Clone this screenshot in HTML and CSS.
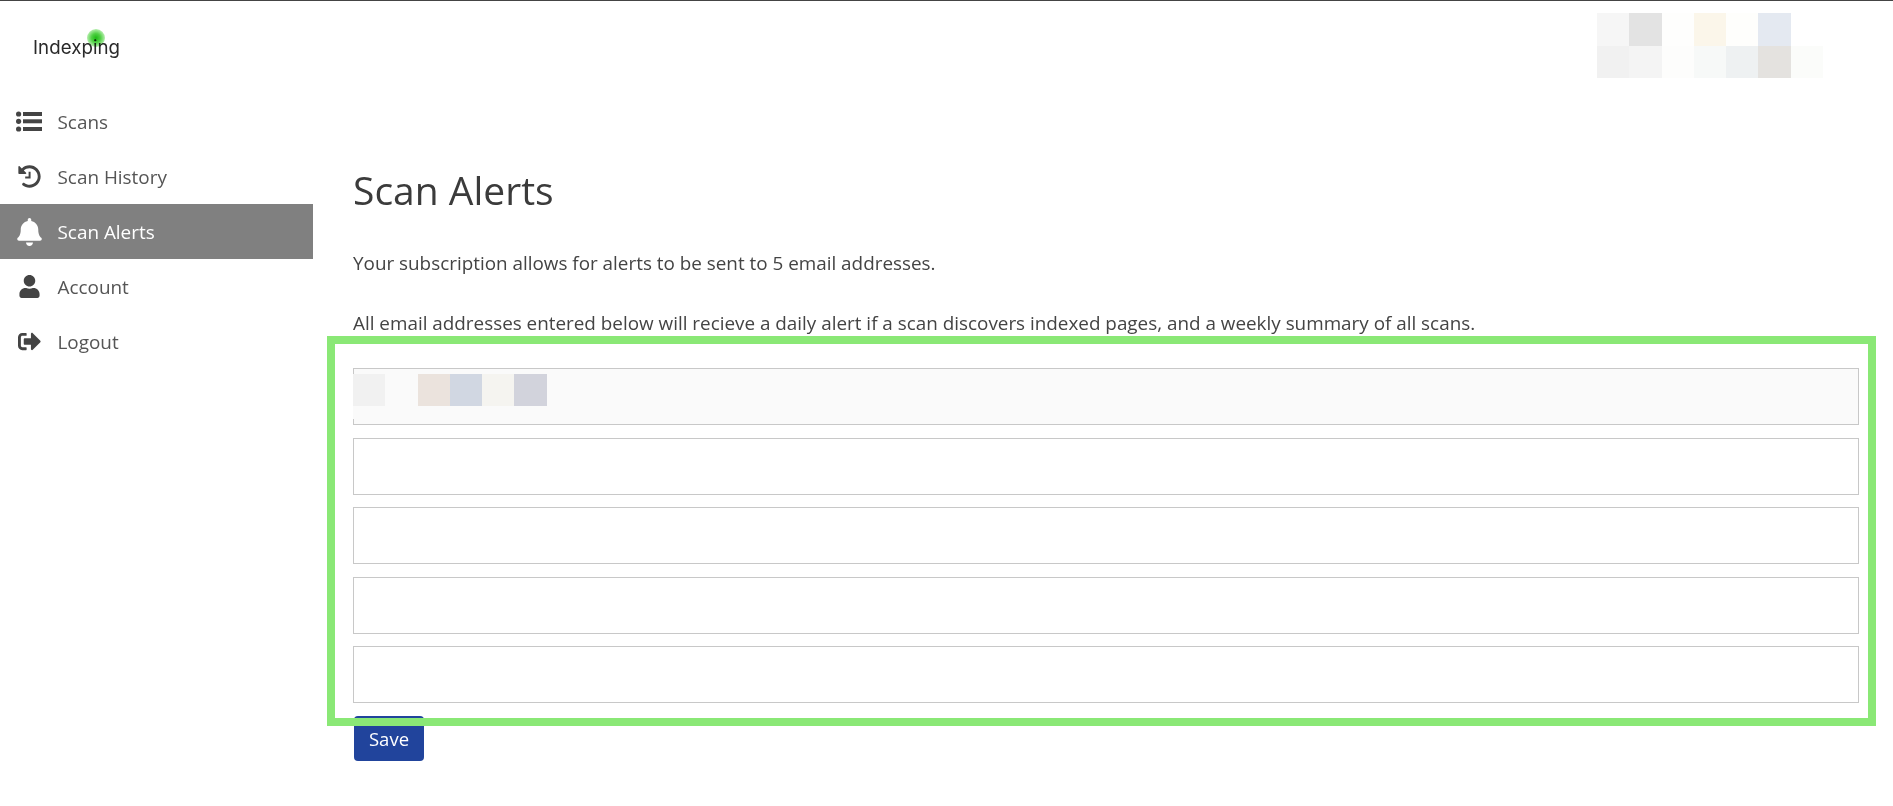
FILE: index.html
```html
<!DOCTYPE html>
<html lang="en">
<head>
<meta charset="utf-8">
<title>Scan Alerts - Indexping</title>
<link rel="stylesheet" href="styles.css">
</head>
<body>
<div class="page">
  <aside class="sidebar">
    <a class="logo" href="#"><span class="logo-text">Indexping</span><span class="logo-dot"></span></a>
    <nav class="nav">
      <a class="nav-item" href="#">
        <span class="nav-icon"><svg class="ico-list" viewBox="0 0 26 21"><circle cx="2.6" cy="3" r="2.6"/><circle cx="2.6" cy="10.3" r="2.6"/><circle cx="2.6" cy="18" r="2.6"/><rect x="7" y="1" width="19" height="4"/><rect x="7" y="8.3" width="19" height="4"/><rect x="7" y="16" width="19" height="4"/></svg></span>
        Scans
      </a>
      <a class="nav-item" href="#">
        <span class="nav-icon"><svg class="ico-history" viewBox="0 0 512 512"><path d="M504 255.531c.253 136.64-111.18 248.372-247.82 248.468-59.015.042-113.223-20.53-155.822-54.911-11.077-8.94-11.905-25.541-1.839-35.607l11.267-11.267c8.609-8.609 22.353-9.551 31.891-1.984C173.062 425.135 212.781 440 256 440c101.705 0 184-82.311 184-184 0-101.705-82.311-184-184-184-48.814 0-93.149 18.969-126.068 49.932l50.754 50.754c10.08 10.08 2.941 27.314-11.313 27.314H24c-8.837 0-16-7.163-16-16V38.627c0-14.254 17.234-21.393 27.314-11.314l49.372 49.372C129.209 34.136 189.552 8 256 8c136.81 0 247.747 110.78 248 247.531z"/><path d="M236 150h44v150H160v-42h76z"/></svg></span>
        Scan History
      </a>
      <a class="nav-item is-active" href="#">
        <span class="nav-icon"><svg class="ico-bell" viewBox="0 0 448 512"><path d="M224 512c35.32 0 63.97-28.65 63.97-64H160.03c0 35.35 28.65 64 63.97 64zm215.39-149.71c-19.32-20.76-55.47-51.99-55.47-154.29 0-77.7-54.48-139.9-127.94-155.16V32c0-17.67-14.32-32-31.98-32s-31.98 14.33-31.98 32v20.84C118.56 68.1 64.08 130.3 64.08 208c0 102.3-36.15 133.53-55.47 154.29-6 6.45-8.66 14.16-8.61 21.71.11 16.4 12.98 32 32.1 32h383.8c19.12 0 32-15.6 32.1-32 .05-7.55-2.61-15.27-8.61-21.71z"/></svg></span>
        Scan Alerts
      </a>
      <a class="nav-item" href="#">
        <span class="nav-icon"><svg class="ico-user" viewBox="0 0 448 512"><path d="M224 256c70.7 0 128-57.3 128-128S294.7 0 224 0 96 57.3 96 128s57.3 128 128 128zm89.6 32h-16.7c-22.2 10.2-46.9 16-72.9 16s-50.6-5.8-72.9-16h-16.7C60.2 288 0 348.2 0 422.4V464c0 26.5 21.5 48 48 48h352c26.5 0 48-21.5 48-48v-41.6c0-74.2-60.2-134.4-134.4-134.4z"/></svg></span>
        Account
      </a>
      <a class="nav-item" href="#">
        <span class="nav-icon"><svg class="ico-logout" viewBox="0 0 512 512"><path d="M497 273L329 441c-15 15-41 4.5-41-17v-96H152c-13.3 0-24-10.7-24-24v-96c0-13.3 10.7-24 24-24h136V88c0-21.4 25.9-32 41-17l168 168c9.3 9.4 9.3 24.6 0 34zM192 436v-40c0-6.6-5.4-12-12-12H96c-17.7 0-32-14.3-32-32V160c0-17.7 14.3-32 32-32h84c6.6 0 12-5.4 12-12V76c0-6.6-5.4-12-12-12H96c-53 0-96 43-96 96v192c0 53 43 96 96 96h84c6.6 0 12-5.4 12-12z"/></svg></span>
        Logout
      </a>
    </nav>
  </aside>
  <main class="main">
    <div class="topbar">
      <div class="pixels pixels-user">
        <i class="c1"></i><i class="c2"></i><i class="c3"></i><i class="c4"></i><i class="c5"></i><i class="c6"></i><i class="c0"></i>
        <i class="c7"></i><i class="c8"></i><i class="c9"></i><i class="c10"></i><i class="c11"></i><i class="c12"></i><i class="c13"></i>
      </div>
    </div>
    <h1 class="title">Scan Alerts</h1>
    <p class="text first">Your subscription allows for alerts to be sent to 5 email addresses.</p>
    <p class="text second">All email addresses entered below will recieve a daily alert if a scan discovers indexed pages, and a weekly summary of all scans.</p>
    <form class="form">
      <div class="field">
        <input class="input is-filled" type="text" aria-label="Email address 1">
        <div class="pixels pixels-email">
          <i class="e1"></i><i></i><i class="e2"></i><i class="e3"></i><i class="e4"></i><i class="e5"></i>
        </div>
      </div>
      <input class="input" type="text" aria-label="Email address 2">
      <input class="input" type="text" aria-label="Email address 3">
      <input class="input" type="text" aria-label="Email address 4">
      <input class="input" type="text" aria-label="Email address 5">
      <button class="save" type="button">Save</button>
    </form>
  </main>
</div>
<div class="highlight"></div>
</body>
</html>
```
FILE: styles.css
```css
* { box-sizing: border-box; }
html, body { margin: 0; height: 100%; }
body {
  background: #fff;
  color: #444;
  font-family: "Open Sans", "Noto Sans", sans-serif;
  overflow: hidden;
}
.page {
  display: grid;
  grid-template-columns: 313px 1fr;
  height: 100%;
  border-top: 1px solid #444;
}
.logo {
  position: relative;
  display: flex;
  align-items: center;
  height: 93px;
  padding: 2px 0 0 33px;
  color: #2a2a2a;
  text-decoration: none;
}
.logo-text {
  font-family: "Inter", sans-serif;
  font-size: 18.7px;
  line-height: 1;
  letter-spacing: 0.05px;
}
.logo-dot {
  position: absolute;
  left: 87px;
  top: 28px;
  width: 18px;
  height: 18px;
  border-radius: 50%;
  background: radial-gradient(circle, #1cba14 0, #50d044 35%, #b4eeac 70%, rgba(255,255,255,0) 100%);
  mix-blend-mode: multiply;
}
.nav { display: flex; flex-direction: column; }
.nav-item {
  display: flex;
  align-items: center;
  height: 55px;
  padding-left: 16px;
  color: #555;
  font-size: 18.9px;
  text-decoration: none;
}
.nav-item.is-active { background: #808080; color: #fff; }
.nav-icon {
  display: flex;
  align-items: center;
  justify-content: center;
  width: 26px;
  margin-right: 15.5px;
}
.nav-icon svg { display: block; fill: #444; }
.is-active .nav-icon svg { fill: #fff; }
.ico-list { width: 26px; height: 21px; }
.ico-history { width: 23px; height: 23px; }
.ico-bell { width: 25px; height: 28px; }
.ico-user { width: 21px; height: 23px; }
.ico-logout { width: 23px; height: 23px; }

.main { display: flex; flex-direction: column; padding: 0 34px 0 40px; }
.topbar { display: flex; justify-content: flex-end; height: 93px; padding: 12px 36px 0 0; }
.pixels { display: grid; }
.pixels-user {
  grid-template-columns: repeat(7, 32.3px);
  grid-auto-rows: 32.5px;
  height: 65px;
}
.c1 { background: #f6f6f6; } .c2 { background: #e3e3e3; } .c3 { background: #fefefd; }
.c4 { background: #fbf6ea; } .c5 { background: #fefefc; } .c6 { background: #e4e9f1; }
.c0 { background: #fff; }
.c7 { background: #f1f1f1; } .c8 { background: #f4f4f4; } .c9 { background: #fdfdfc; }
.c10 { background: #f7f9f8; } .c11 { background: #eef1f2; } .c12 { background: #e4e2df; }
.c13 { background: #fbfcfa; }

.title {
  margin: 69px 0 0;
  color: #3b3b3b;
  font-size: 39px;
  font-weight: 400;
  line-height: 54px;
}
.text { margin: 0; font-size: 18.87px; line-height: 25px; color: #444; }
.first { margin-top: 34px; }
.second { margin-top: 35px; }
.form { display: flex; flex-direction: column; align-items: flex-start; gap: 12.5px; margin-top: 32px; }
.field { position: relative; width: 100%; height: 57px; }
.input {
  display: block;
  width: 100%;
  height: 57px;
  border: 1px solid #c8c8c8;
  border-radius: 0;
  background: #fff;
  outline: none;
}
.is-filled { background: #fafafa; }
.pixels-email {
  position: absolute;
  left: 0;
  top: 6px;
  height: 45px;
  padding-bottom: 13px;
  background: #fafafa;
  grid-template-columns: repeat(6, 32.3px);
}
.e1 { background: #f1f1f1; } .e2 { background: #ebe3dd; } .e3 { background: #d1d7e2; }
.e4 { background: #f5f4f0; } .e5 { background: #d2d3dc; }
.save {
  width: 70px;
  height: 45px;
  margin: 0.5px 0 0 1px;
  border: 0;
  border-radius: 4px;
  background: #21449c;
  color: #fff;
  font-family: inherit;
  font-size: 18.5px;
}
.highlight {
  position: absolute;
  left: 327px;
  top: 336px;
  width: 1549px;
  height: 390px;
  border: 8px solid #8ae876;
  pointer-events: none;
}
```
